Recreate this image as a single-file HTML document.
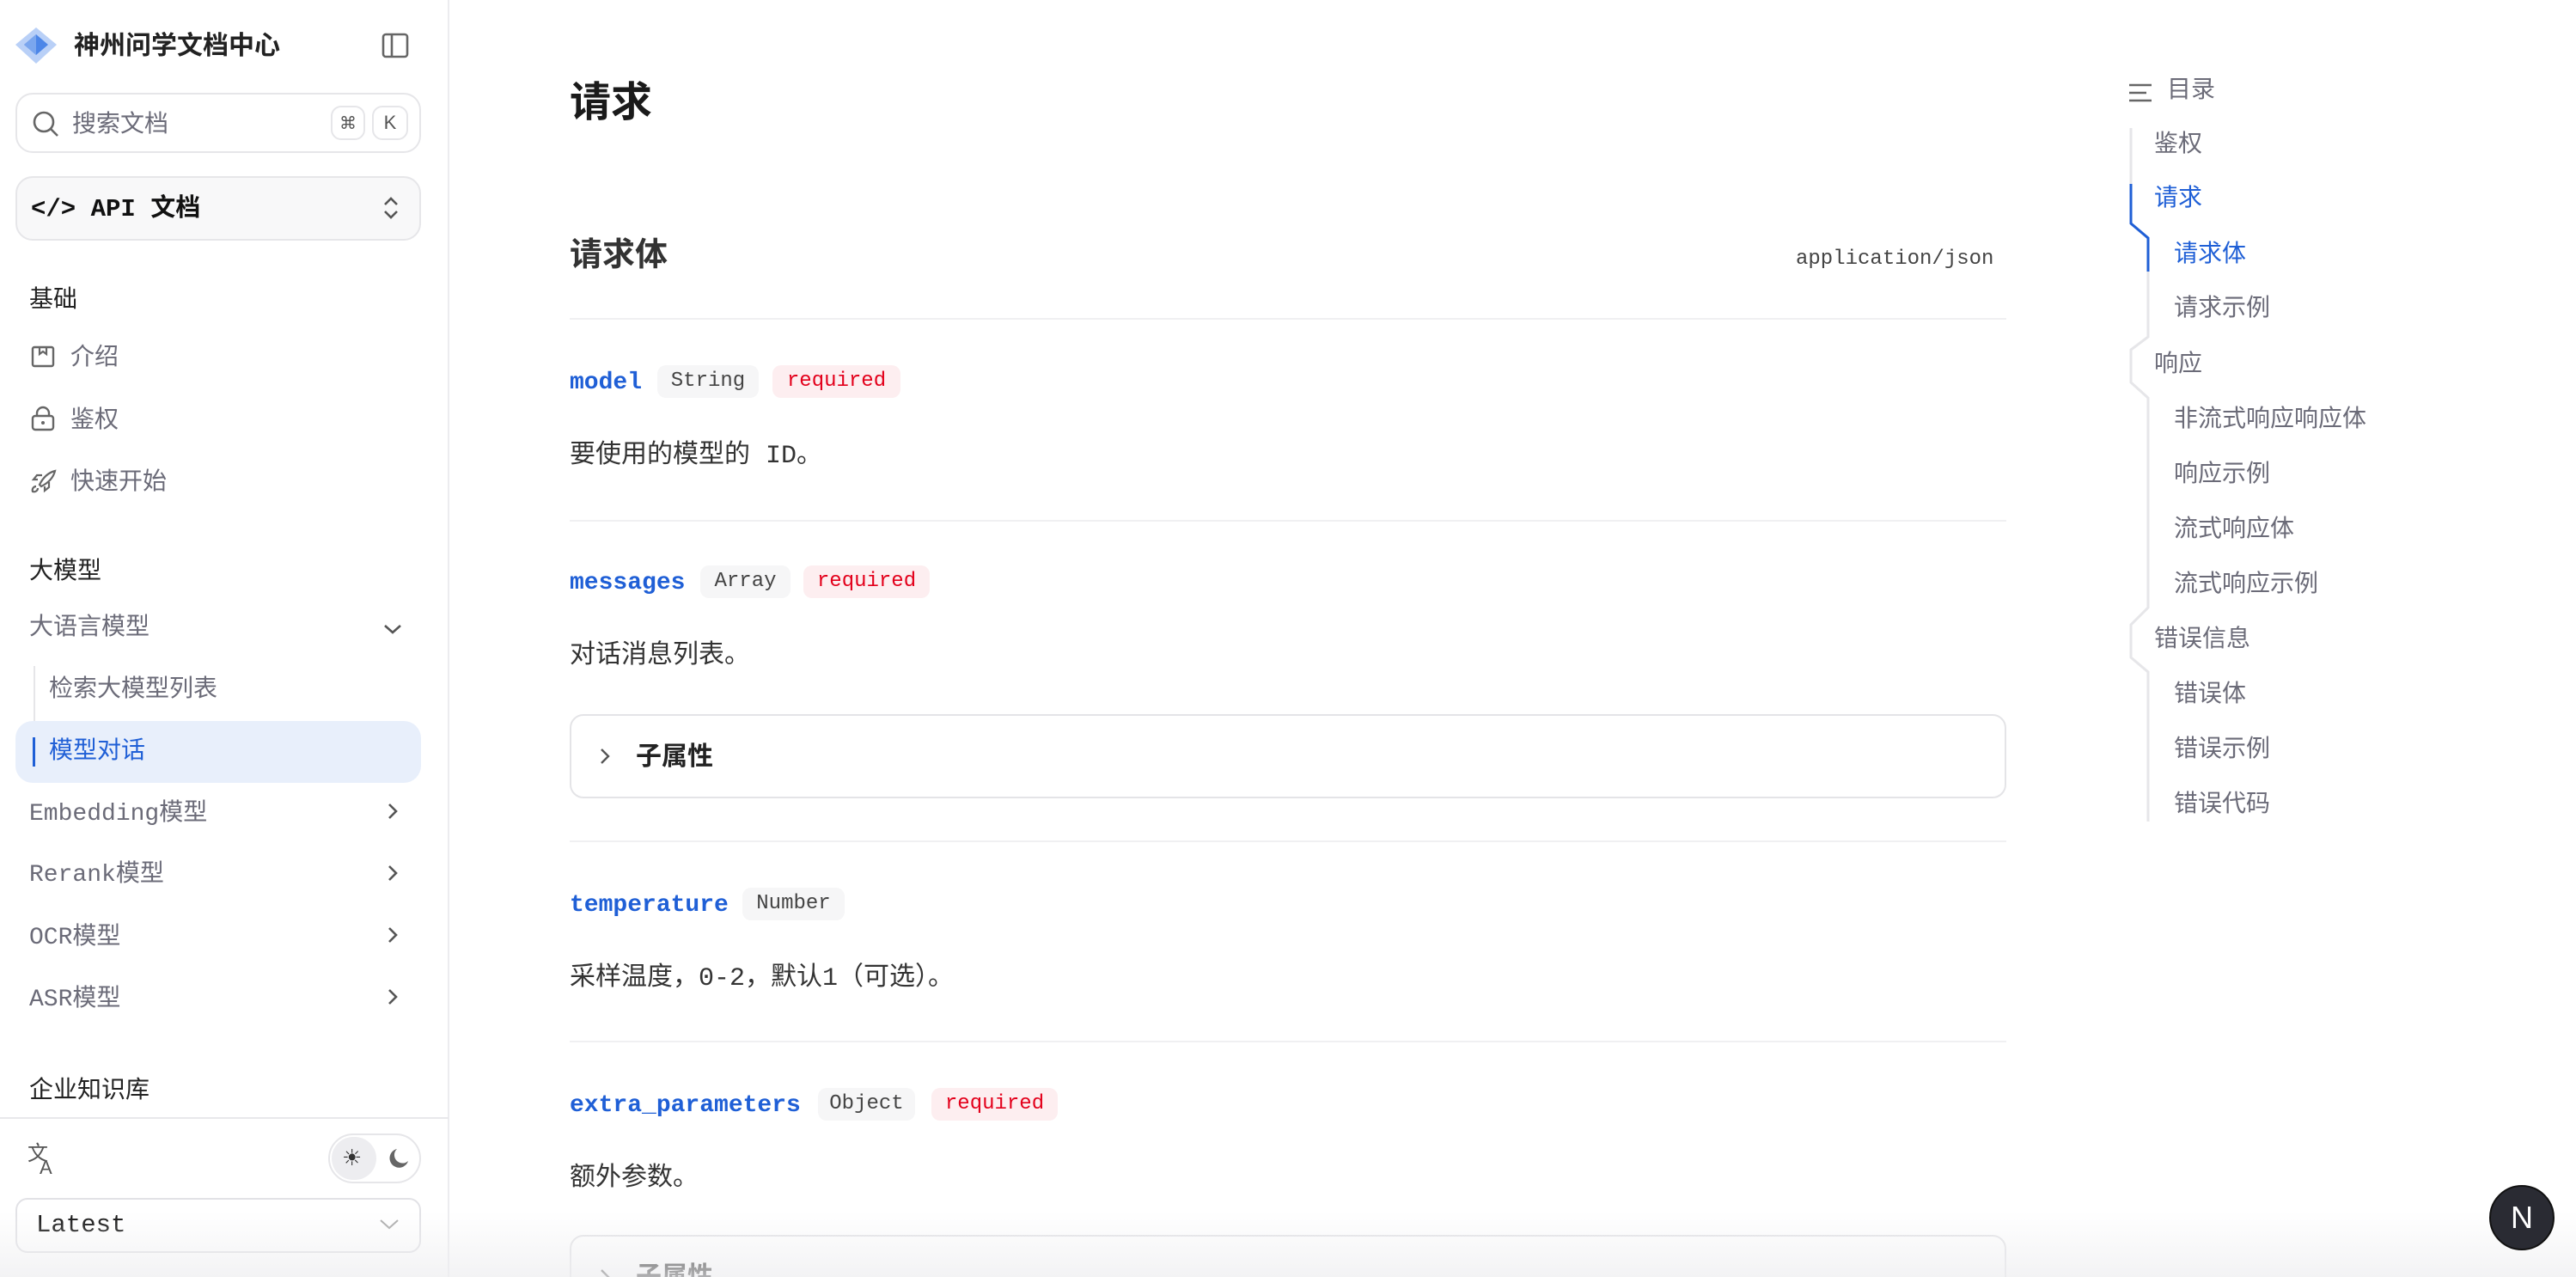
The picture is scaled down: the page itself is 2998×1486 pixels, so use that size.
<!DOCTYPE html>
<html style="width:2998px;height:1486px;overflow:hidden"><head><meta charset="utf-8"><style>
*{margin:0;padding:0;box-sizing:border-box}
body{width:2998px;height:1486px;overflow:hidden;background:#fff;position:relative;font-family:"Liberation Mono","Noto Sans CJK SC",monospace;color:#222}
.a{position:absolute;white-space:nowrap}
.cjk{font-family:"Liberation Sans","Noto Sans CJK SC",sans-serif}
.side{color:#6b6b78;font-size:28px;line-height:40px}
.hr{position:absolute;left:663px;width:1672px;height:2px;background:#f0f0f2}
.name{color:#1f5fd6;font-weight:bold;font-size:28px;line-height:40px}
.badge{position:absolute;height:38px;line-height:38px;border-radius:10px;font-size:24px;text-align:center}
.t{background:#f6f6f7;color:#444}
.r{background:#fdeef0;color:#e3001b}
.desc{font-size:30px;line-height:44px;color:#333}
.toc{font-size:28px;line-height:40px;color:#6b6b78}
</style></head><body>

<!-- sidebar -->
<div class="a" style="left:521px;top:0;width:2px;height:1486px;background:#ececef"></div>
<svg class="a" style="left:16px;top:30px" width="52" height="46" viewBox="0 0 52 46">
<polygon points="26,2 50,22 26,44 2,22" fill="#b9d0f7"/>
<polygon points="26,10 40,22 26,34 12,22" fill="#4c86e8"/>
<polygon points="26,10 26,34 12,22" fill="#7aa6ee"/>
</svg>
<div class="a cjk" style="left:86px;top:34px;font-size:30px;line-height:40px;font-weight:bold;color:#222">神州问学文档中心</div>
<svg class="a" style="left:444px;top:38px" width="32" height="30" viewBox="0 0 32 30"><rect x="2" y="2" width="28" height="26" rx="3" fill="none" stroke="#666" stroke-width="2.6"/><line x1="12" y1="2" x2="12" y2="28" stroke="#666" stroke-width="2.6"/></svg>

<div class="a" style="left:18px;top:108px;width:472px;height:70px;border:2px solid #e6e6e9;border-radius:20px"></div>
<svg class="a" style="left:36px;top:127px" width="34" height="34" viewBox="0 0 34 34"><circle cx="15" cy="15" r="11" fill="none" stroke="#666" stroke-width="2.6"/><line x1="23" y1="23" x2="31" y2="31" stroke="#666" stroke-width="2.6"/></svg>
<div class="a cjk" style="left:84px;top:124px;font-size:28px;line-height:40px;color:#6b6b78">搜索文档</div>
<div class="a" style="left:385px;top:123px;width:40px;height:40px;border:2px solid #e6e6e9;border-radius:12px;text-align:center;line-height:36px;font-size:20px;color:#555;font-family:'DejaVu Sans',sans-serif">⌘</div>
<div class="a" style="left:433px;top:123px;width:42px;height:40px;border:2px solid #e6e6e9;border-radius:12px;text-align:center;line-height:36px;font-size:22px;color:#555;font-family:'Liberation Sans',sans-serif">K</div>

<div class="a" style="left:18px;top:205px;width:472px;height:75px;border:2px solid #e6e6e9;border-radius:20px;background:#f8f8f9"></div>
<div class="a" style="left:36px;top:224px;font-size:29px;line-height:40px;font-weight:bold;color:#111">&lt;/&gt; API 文档</div>
<svg class="a" style="left:443px;top:224px" width="24" height="36" viewBox="0 0 24 36"><polyline points="5,14 12,7 19,14" fill="none" stroke="#555" stroke-width="2.6"/><polyline points="5,22 12,29 19,22" fill="none" stroke="#555" stroke-width="2.6"/></svg>

<div class="a cjk" style="left:34px;top:328px;font-size:28px;line-height:40px;color:#222">基础</div>
<svg class="a" style="left:36px;top:401px" width="28" height="28" viewBox="0 0 28 28"><rect x="2" y="3" width="24" height="22" rx="2" fill="none" stroke="#666" stroke-width="2.4"/><polyline points="10,3 10,11 14,8 18,11 18,3" fill="none" stroke="#666" stroke-width="2.2"/></svg>
<div class="a side cjk" style="left:82px;top:395px">介绍</div>
<svg class="a" style="left:36px;top:472px" width="28" height="30" viewBox="0 0 28 30"><rect x="2" y="12" width="24" height="16" rx="3" fill="none" stroke="#666" stroke-width="2.4"/><path d="M7 12V9a7 7 0 0 1 14 0v3" fill="none" stroke="#666" stroke-width="2.4"/><circle cx="14" cy="20" r="2" fill="#666"/></svg>
<div class="a side cjk" style="left:82px;top:468px">鉴权</div>
<svg class="a" style="left:36px;top:544px" width="30" height="30" viewBox="0 0 30 30"><path d="M10 20c4-8 10-14 18-16-2 8-8 14-16 18z M6 22c-3 0-5 3-4 6 3 1 6-1 6-4 M8 14h-5l4-5h6 M16 22v5l5-4v-6" fill="none" stroke="#666" stroke-width="2.2"/></svg>
<div class="a side cjk" style="left:82px;top:540px">快速开始</div>

<div class="a cjk" style="left:34px;top:644px;font-size:28px;line-height:40px;color:#222">大模型</div>
<div class="a side" style="left:34px;top:712px">大语言模型</div>
<svg class="a" style="left:444px;top:723px" width="26" height="18" viewBox="0 0 26 18"><polyline points="4,5 13,13 22,5" fill="none" stroke="#555" stroke-width="2.6"/></svg>
<div class="a" style="left:39px;top:775px;width:2px;height:133px;background:#e6e6e9"></div>
<div class="a side" style="left:57px;top:784px">检索大模型列表</div>
<div class="a" style="left:18px;top:839px;width:472px;height:72px;background:#e8effb;border-radius:20px"></div>
<div class="a" style="left:38px;top:858px;width:3px;height:34px;background:#1f5fd6"></div>
<div class="a side" style="left:57px;top:856px;color:#1f5fd6">模型对话</div>
<div class="a side" style="left:34px;top:928px">Embedding模型</div>
<div class="a side" style="left:34px;top:999px">Rerank模型</div>
<div class="a side" style="left:34px;top:1072px">OCR模型</div>
<div class="a side" style="left:34px;top:1144px">ASR模型</div>
<svg class="a" style="left:448px;top:932px" width="18" height="260" viewBox="0 0 18 260"><g fill="none" stroke="#555" stroke-width="2.6"><polyline points="5,4 13,12 5,20"/><polyline points="5,76 13,84 5,92"/><polyline points="5,148 13,156 5,164"/><polyline points="5,220 13,228 5,236"/></g></svg>
<div class="a cjk" style="left:34px;top:1248px;font-size:28px;line-height:40px;color:#222">企业知识库</div>
<div class="a" style="left:0;top:1300px;width:522px;height:2px;background:#e8e8eb"></div>
<div class="a" style="left:32px;top:1330px;font-size:24px;color:#555;line-height:30px">文</div>
<div class="a" style="left:46px;top:1346px;font-size:22px;color:#555;font-family:'Liberation Sans';line-height:26px">A</div>
<div class="a" style="left:382px;top:1319px;width:108px;height:58px;border:2px solid #e6e6e9;border-radius:29px"></div>
<div class="a" style="left:386px;top:1323px;width:52px;height:50px;border-radius:25px;background:#ededf0"></div>
<div class="a" style="left:398px;top:1330px;font-size:26px;color:#333;line-height:36px;font-family:'DejaVu Sans'">☀</div>
<svg class="a" style="left:448px;top:1334px" width="30" height="30" viewBox="0 0 30 30"><path d="M14 3a11 11 0 1 0 13 14A9 9 0 0 1 14 3z" fill="#666"/></svg>
<div class="a" style="left:18px;top:1394px;width:472px;height:64px;border:2px solid #e2e2e6;border-radius:14px"></div>
<div class="a" style="left:42px;top:1406px;font-size:29px;line-height:40px;color:#111">Latest</div>
<svg class="a" style="left:440px;top:1416px" width="26" height="18" viewBox="0 0 26 18"><polyline points="3,4 13,13 23,4" fill="none" stroke="#aaa" stroke-width="2"/></svg>

<!-- main -->
<div class="a cjk" style="left:663px;top:92px;font-size:48px;line-height:56px;font-weight:bold;color:#1a1a1a">请求</div>
<div class="a cjk" style="left:663px;top:274px;font-size:38px;line-height:46px;font-weight:bold;color:#333">请求体</div>
<div class="a" style="left:2090px;top:286px;font-size:24px;line-height:32px;color:#444">application/json</div>
<div class="hr" style="top:370px"></div>

<div class="a name" style="left:663px;top:426px">model</div>
<div class="badge t" style="left:765px;top:425px;width:118px">String</div>
<div class="badge r" style="left:899px;top:425px;width:149px">required</div>
<div class="a desc" style="left:663px;top:509px">要使用的模型的 ID。</div>
<div class="hr" style="top:605px"></div>

<div class="a name" style="left:663px;top:659px">messages</div>
<div class="badge t" style="left:815px;top:658px;width:105px">Array</div>
<div class="badge r" style="left:935px;top:658px;width:147px">required</div>
<div class="a desc" style="left:663px;top:742px">对话消息列表。</div>
<div class="a" style="left:663px;top:831px;width:1672px;height:98px;border:2px solid #e4e4e7;border-radius:16px"></div>
<svg class="a" style="left:696px;top:868px" width="16" height="24" viewBox="0 0 16 24"><polyline points="4,4 12,12 4,20" fill="none" stroke="#555" stroke-width="2.4"/></svg>
<div class="a cjk" style="left:740px;top:861px;font-size:30px;line-height:40px;font-weight:bold;color:#222">子属性</div>
<div class="hr" style="top:978px"></div>

<div class="a name" style="left:663px;top:1034px">temperature</div>
<div class="badge t" style="left:864px;top:1033px;width:119px">Number</div>
<div class="a desc" style="left:663px;top:1117px">采样温度，0-2，默认1（可选）。</div>
<div class="hr" style="top:1211px"></div>

<div class="a name" style="left:663px;top:1267px">extra_parameters</div>
<div class="badge t" style="left:952px;top:1266px;width:113px">Object</div>
<div class="badge r" style="left:1084px;top:1266px;width:147px">required</div>
<div class="a desc" style="left:663px;top:1350px">额外参数。</div>
<div class="a" style="left:663px;top:1437px;width:1672px;height:98px;border:2px solid #e4e4e7;border-radius:16px"></div>
<svg class="a" style="left:696px;top:1474px" width="16" height="24" viewBox="0 0 16 24"><polyline points="4,4 12,12 4,20" fill="none" stroke="#555" stroke-width="2.4"/></svg>
<div class="a cjk" style="left:740px;top:1466px;font-size:30px;line-height:40px;font-weight:bold;color:#222">子属性</div>

<!-- bottom fade -->
<div class="a" style="left:0;top:1410px;width:2998px;height:76px;background:linear-gradient(rgba(255,255,255,0),rgba(238,238,240,0.7))"></div>

<!-- TOC -->
<svg class="a" style="left:2476px;top:96px" width="30" height="24" viewBox="0 0 30 24"><g stroke="#666" stroke-width="2.4"><line x1="2" y1="3" x2="28" y2="3"/><line x1="2" y1="12" x2="22" y2="12"/><line x1="2" y1="21" x2="28" y2="21"/></g></svg>
<div class="a toc" style="left:2522px;top:87px">目录</div>
<svg class="a" style="left:2470px;top:140px" width="40" height="830" viewBox="2470 140 40 830">
<path d="M2480 149V260L2500 277V392L2480 407V445L2500 463V707L2480 727V765L2500 782V956" fill="none" stroke="#e6e6e9" stroke-width="3"/>
<path d="M2480 214V260L2500 277V316" fill="none" stroke="#1f5fd6" stroke-width="3"/>
</svg>
<div class="a toc" style="left:2507px;top:150px">鉴权</div>
<div class="a toc" style="left:2507px;top:213px;color:#1f5fd6">请求</div>
<div class="a toc" style="left:2530px;top:278px;color:#1f5fd6">请求体</div>
<div class="a toc" style="left:2530px;top:341px">请求示例</div>
<div class="a toc" style="left:2507px;top:406px">响应</div>
<div class="a toc" style="left:2530px;top:470px">非流式响应响应体</div>
<div class="a toc" style="left:2530px;top:534px">响应示例</div>
<div class="a toc" style="left:2530px;top:598px">流式响应体</div>
<div class="a toc" style="left:2530px;top:662px">流式响应示例</div>
<div class="a toc" style="left:2507px;top:726px">错误信息</div>
<div class="a toc" style="left:2530px;top:790px">错误体</div>
<div class="a toc" style="left:2530px;top:854px">错误示例</div>
<div class="a toc" style="left:2530px;top:918px">错误代码</div>

<div class="a" style="left:2897px;top:1379px;width:76px;height:76px;border-radius:38px;background:#2a2b33;border:2px solid #111;color:#fff;text-align:center;line-height:72px;font-size:36px;font-family:'Liberation Sans',sans-serif">N</div>
</body></html>
